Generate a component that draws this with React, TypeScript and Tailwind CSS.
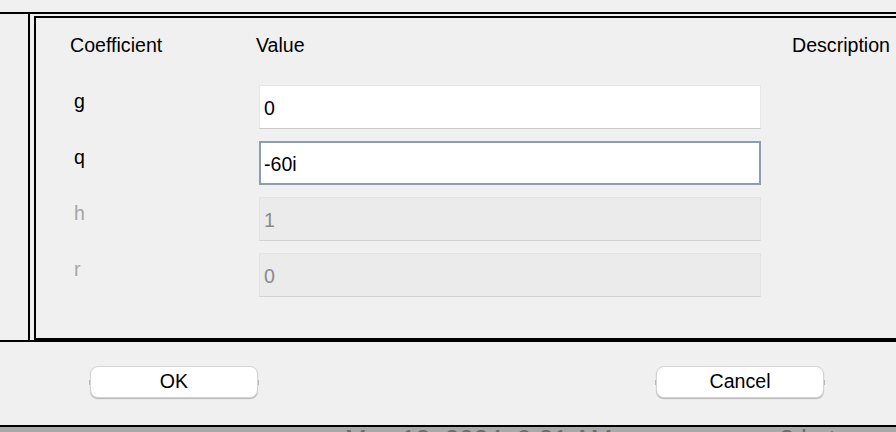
const ROWS = [
  { name: "g", value: "0", state: "normal" },
  { name: "q", value: "-60i", state: "focused" },
  { name: "h", value: "1", state: "disabled" },
  { name: "r", value: "0", state: "disabled" },
];

function Field({ value, state }: { value: string; state: string }) {
  if (state === "focused") {
    return (
      <div className="ml-[3px] h-[44px] w-[502px] border-2 border-[#8e9cb0] bg-white px-[3px] pt-[10px] text-black">
        {value}
      </div>
    );
  }
  if (state === "disabled") {
    return (
      <div className="ml-[3px] h-[44px] w-[502px] border border-[#e4e4e4] border-b-[#d2d2d2] bg-[#ebebeb] px-[4px] pt-[11px] text-[#8a8a8a]">
        {value}
      </div>
    );
  }
  return (
    <div className="ml-[3px] h-[44px] w-[502px] border border-[#e6e6e6] border-b-[#c9c9c9] bg-white px-[4px] pt-[11px] text-black">
      {value}
    </div>
  );
}

function MacButton({ label }: { label: string }) {
  return (
    <button className="relative flex h-[32px] w-[168px] items-center justify-center rounded-[8px] border-[0.5px] border-[#d4d4d4] bg-white pb-[2px] text-black shadow-[0_1px_1px_rgba(0,0,0,0.25)]">
      {label}
      <span className="absolute left-[-2px] top-[13px] h-[5px] w-[1px] bg-[#b8b8b8]" />
      <span className="absolute right-[-2px] top-[13px] h-[5px] w-[1px] bg-[#b8b8b8]" />
    </button>
  );
}

export default function App() {
  return (
    <div className="flex h-[432px] w-[896px] flex-col overflow-hidden bg-[#f0f0f0] font-['Liberation_Sans',Arial,sans-serif] text-[19.6px] leading-[22px]">
      <div className="h-[12px] shrink-0" />

      <div className="flex h-[330px] shrink-0 border-y-2 border-black">
        <div className="w-[30px] shrink-0 border-r-2 border-black" />
        <div className="ml-[4px] mt-[2px] flex-1 border-y-2 border-l-2 border-black pl-[34px] pt-[16px]">
          <div className="flex text-black">
            <div className="w-[186px] shrink-0">Coefficient</div>
            <div className="w-[536px] shrink-0">Value</div>
            <div className="whitespace-nowrap">Description</div>
          </div>

          <div className="mt-[29px] flex flex-col gap-[12px]">
            {ROWS.map((r) => (
              <div key={r.name} className="flex items-start">
                <div className={`mt-[5px] w-[186px] shrink-0 pl-[4px] ${r.state === "disabled" ? "text-[#a6a6a6]" : "text-black"}`}>
                  {r.name}
                </div>
                <Field value={r.value} state={r.state} />
              </div>
            ))}
          </div>
        </div>
      </div>

      <div className="flex h-[83px] shrink-0 items-start gap-[398px] pl-[90px] pt-[24px]">
        <MacButton label="OK" />
        <MacButton label="Cancel" />
      </div>

      <div className="h-[2px] shrink-0 bg-black" />
      <div className="relative h-[5px] shrink-0 overflow-hidden bg-[#a9a9a9] text-[26px] leading-[26px] text-[#6c6c6c]">
        <div className="mt-[-1px] flex whitespace-nowrap">
          <span className="ml-[345px]">May 18, 2024, 9:31 AM</span>
          <span className="ml-[167px]">2 bytes</span>
        </div>
      </div>
    </div>
  );
}
